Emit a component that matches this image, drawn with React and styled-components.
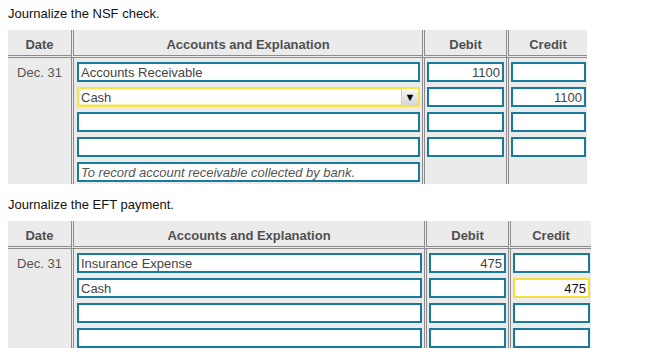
import React from 'react'
import styled, { createGlobalStyle } from 'styled-components'

const GlobalStyle = createGlobalStyle`
  html, body {
    margin: 0;
    padding: 0;
    background: #fff;
  }
  body {
    font-family: "Liberation Sans", Arial, sans-serif;
  }
`

const Page = styled.div`
  padding: 0 8px;
`

const Prompt = styled.div`
  font-size: 13px;
  line-height: 16px;
  color: #111;
  margin: ${p => p.$top}px 0 8px 0;
`

const Journal = styled.div`
  display: grid;
  grid-template-columns: ${p => p.$cols.join('px ')}px;
  background: #ebebeb;
  width: max-content;
`

const HeadCell = styled.div`
  box-sizing: border-box;
  height: 28px;
  padding-top: 3px;
  display: flex;
  align-items: center;
  justify-content: center;
  font-size: 13px;
  font-weight: bold;
  color: #505050;
  border-bottom: 3px double #8c8c8c;
  border-left: ${p => (p.$first ? 'none' : '3px double #8c8c8c')};
`

const BodyCol = styled.div`
  display: flex;
  flex-direction: column;
  gap: 5px;
  padding: 4px ${p => p.$pr}px ${p => p.$pb}px ${p => p.$pl}px;
  border-left: ${p => (p.$first ? 'none' : '3px double #8c8c8c')};
`

const DateText = styled.div`
  height: 20px;
  line-height: 21px;
  text-align: center;
  font-size: 13px;
  color: #555;
`

const Field = styled.input`
  box-sizing: border-box;
  display: block;
  width: 100%;
  height: 20px;
  margin: 0;
  padding: 1px 2px 0;
  border: 2px solid ${p => (p.$focus ? '#f4e13f' : '#1a7a9b')};
  border-radius: 0;
  outline: none;
  background: #fff;
  font-family: "Liberation Sans", Arial, sans-serif;
  font-size: 13px;
  font-style: ${p => (p.$note ? 'italic' : 'normal')};
  color: ${p => (p.$focus ? '#111' : p.$note ? '#555' : '#444')};
  text-align: ${p => (p.$num ? 'right' : 'left')};
`

const Blank = styled.div`
  height: 20px;
`

const SelectBox = styled.div`
  box-sizing: border-box;
  height: 20px;
  display: flex;
  align-items: stretch;
  border: 2px solid #f6e44a;
  box-shadow: inset 0 0 0 1px #fbf3b4;
  background: #fff;
`

const SelectText = styled.div`
  flex: 1;
  padding: 1px 2px 0;
  font-size: 13px;
  line-height: 16px;
  color: #444;
`

const Arrow = styled.div`
  width: 16px;
  display: flex;
  align-items: center;
  justify-content: center;
  background: linear-gradient(#f8f8f8, #d6d6d6);
  border-left: 1px solid #cfcfcf;
  font-size: 11px;
  line-height: 11px;
  color: #000;
`

const Cell = ({ value, ...rest }) =>
  value === undefined ? <Blank /> : <Field readOnly defaultValue={value} {...rest} />

const JournalTable = ({ cols, rows, pb }) => (
  <Journal $cols={cols}>
    <HeadCell $first>Date</HeadCell>
    <HeadCell>Accounts and Explanation</HeadCell>
    <HeadCell>Debit</HeadCell>
    <HeadCell>Credit</HeadCell>

    <BodyCol $first $pl={0} $pr={0} $pb={pb}>
      <DateText>Dec. 31</DateText>
    </BodyCol>
    <BodyCol $pl={3} $pr={2} $pb={pb}>
      {rows.map((r, i) =>
        r.select ? (
          <SelectBox key={i}>
            <SelectText>{r.account}</SelectText>
            <Arrow>▼</Arrow>
          </SelectBox>
        ) : (
          <Field key={i} readOnly defaultValue={r.account} $note={r.note} />
        )
      )}
    </BodyCol>
    <BodyCol $pl={2} $pr={2} $pb={pb}>
      {rows.map((r, i) => (
        <Cell key={i} value={r.debit} $num $focus={r.debitFocus} />
      ))}
    </BodyCol>
    <BodyCol $pl={2} $pr={1} $pb={pb}>
      {rows.map((r, i) => (
        <Cell key={i} value={r.credit} $num $focus={r.creditFocus} />
      ))}
    </BodyCol>
  </Journal>
)

const nsfRows = [
  { account: 'Accounts Receivable', debit: '1100', credit: '' },
  { account: 'Cash', select: true, debit: '', credit: '1100' },
  { account: '', debit: '', credit: '' },
  { account: '', debit: '', credit: '' },
  { account: 'To record account receivable collected by bank.', note: true }
]

const eftRows = [
  { account: 'Insurance Expense', debit: '475', credit: '' },
  { account: 'Cash', debit: '', credit: '475', creditFocus: true },
  { account: '', debit: '', credit: '' },
  { account: '', debit: '', credit: '' }
]

const App = () => (
  <>
    <GlobalStyle />
    <Page>
      <Prompt $top={6}>Journalize the NSF check.</Prompt>
      <JournalTable cols={[63, 351, 84, 81]} rows={nsfRows} pb={2} />
      <Prompt $top={13}>Journalize the EFT payment.</Prompt>
      <JournalTable cols={[63, 353, 84, 83]} rows={eftRows} pb={0} />
    </Page>
  </>
)

export default App
